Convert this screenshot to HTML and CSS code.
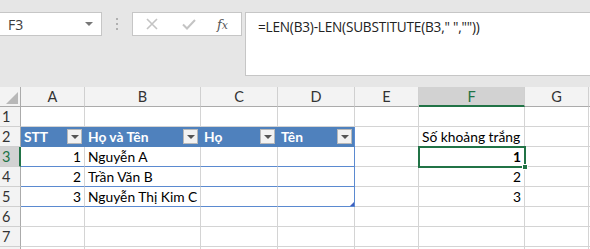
FILE: index.html
```html
<!DOCTYPE html>
<html>
<head>
<meta charset="utf-8">
<link rel="stylesheet" href="styles.css">
</head>
<body>
<div class="app">
  <div class="toolbar">
    <div class="namebox"><span class="ref">F3</span><span class="caret"></span></div>
    <div class="grip"><i></i><i></i><i></i></div>
    <div class="fnbox">
      <svg class="ico" width="14" height="14" viewBox="0 0 14 14"><path d="M2 2 L12 12 M12 2 L2 12" stroke="#c4c4c4" stroke-width="1.6" fill="none"/></svg>
      <svg class="ico" width="16" height="14" viewBox="0 0 16 14"><path d="M2 7.5 L6 11.5 L14 3" stroke="#c4c4c4" stroke-width="2" fill="none"/></svg>
      <span class="fx">f<span class="x">x</span></span>
    </div>
    <div class="formula">=LEN(B3)-LEN(SUBSTITUTE(B3," ",""))</div>
  </div>
  <div class="sheet">
    <div class="corner"><svg width="14" height="14" viewBox="0 0 14 14"><path d="M14 2 L14 14 L2 14 Z" fill="#b8b8b8"/></svg></div>
    <div class="ch">A</div><div class="ch">B</div><div class="ch">C</div><div class="ch">D</div><div class="ch">E</div><div class="ch sel">F</div><div class="ch">G</div><div class="ch end"></div>

    <div class="rh">1</div><div class="c"></div><div class="c"></div><div class="c"></div><div class="c"></div><div class="c"></div><div class="c"></div><div class="c"></div><div class="c end"></div>

    <div class="rh">2</div>
    <div class="c th">STT<span class="flt"></span></div>
    <div class="c th">Họ và Tên<span class="flt"></span></div>
    <div class="c th">Họ<span class="flt"></span></div>
    <div class="c th tr">Tên<span class="flt"></span></div>
    <div class="c"></div><div class="c">Số khoảng trắng</div><div class="c"></div><div class="c end"></div>

    <div class="rh sel">3</div>
    <div class="c td num">1</div><div class="c td">Nguyễn A</div><div class="c td"></div><div class="c td tr"></div>
    <div class="c"></div><div class="c num active"><b>1</b><span class="handle"></span></div><div class="c"></div><div class="c end"></div>

    <div class="rh">4</div>
    <div class="c td num">2</div><div class="c td">Trần Văn B</div><div class="c td"></div><div class="c td tr"></div>
    <div class="c"></div><div class="c num">2</div><div class="c"></div><div class="c end"></div>

    <div class="rh">5</div>
    <div class="c td num">3</div><div class="c td">Nguyễn Thị Kim C</div><div class="c td"></div><div class="c td tr last"><span class="resize"></span></div>
    <div class="c"></div><div class="c num">3</div><div class="c"></div><div class="c end"></div>

    <div class="rh">6</div><div class="c"></div><div class="c"></div><div class="c"></div><div class="c"></div><div class="c"></div><div class="c"></div><div class="c"></div><div class="c end"></div>
    <div class="rh">7</div><div class="c"></div><div class="c"></div><div class="c"></div><div class="c"></div><div class="c"></div><div class="c"></div><div class="c"></div><div class="c end"></div>
    <div class="rh"></div><div class="c"></div><div class="c"></div><div class="c"></div><div class="c"></div><div class="c"></div><div class="c"></div><div class="c"></div><div class="c end"></div>
  </div>
</div>
</body>
</html>
```

FILE: styles.css
```css
* { box-sizing: border-box; }
html, body { margin: 0; padding: 0; }
body {
  width: 590px;
  height: 249px;
  overflow: hidden;
  background: #e6e6e6;
  font-family: Lato, "Noto Sans", sans-serif;
  font-size: 13.8px;
  color: #000;
}
.app { display: flex; flex-direction: column; height: 249px; overflow: hidden; }
.toolbar {
  display: flex;
  align-items: flex-start;
  height: 87px;
  flex: none;
  padding-top: 12px;
}
.namebox {
  width: 102px;
  height: 24px;
  background: #fff;
  border: 1px solid #c6c6c6;
  border-left: none;
  display: flex;
  align-items: center;
  justify-content: space-between;
  padding: 0 8px 0 8px;
  color: #444;
}
.ref { font-family: "Open Sans", sans-serif; font-size: 14px; color: #3b3b3b; }
.caret {
  width: 0; height: 0;
  border-left: 4px solid transparent;
  border-right: 4px solid transparent;
  border-top: 4px solid #777;
}
.grip {
  width: 30px;
  height: 24px;
  display: flex;
  flex-direction: column;
  align-items: center;
  justify-content: center;
  gap: 3px;
}
.grip i { display: block; width: 2px; height: 2px; background: #b0b0b0; }
.fnbox {
  width: 110px;
  height: 24px;
  background: #fff;
  border: 1px solid #c6c6c6;
  display: flex;
  align-items: center;
  padding-left: 12px;
  gap: 22px;
}
.fx {
  font-family: "DejaVu Serif", "Liberation Serif", serif;
  font-style: italic;
  font-size: 13px;
  color: #555;
  margin-left: -2px;
}
.fx .x { font-size: 11px; }
.formula {
  margin-left: 3px;
  flex: 1;
  height: 64px;
  background: #fff;
  border: 1px solid #c6c6c6;
  border-right: none;
  padding: 4px 0 0 12px;
  font-family: "Open Sans", sans-serif;
  font-size: 13.6px;
  color: #222;
  letter-spacing: -0.2px;
}
.sheet {
  display: grid;
  grid-template-columns: 21px 64px 116px 77px 77px 64px 106px 64px 1fr;
  grid-auto-rows: 20px;
  background: #fff;
}
.corner, .ch, .rh {
  background: #f3f3f3;
  border-right: 1px solid #d0d0d0;
  border-bottom: 1px solid #d0d0d0;
  color: #333;
  font-size: 14.5px;
}
.corner { display: flex; align-items: flex-end; justify-content: flex-end; padding: 0 2px 2px 0; border-bottom-color: #ababab; border-right-color: #ababab; }
.ch { display: flex; align-items: center; justify-content: center; border-bottom-color: #ababab; }
.ch.end { border-right: none; }
.ch.sel { background: #d2d2d2; color: #217346; border-bottom: 2px solid #217346; }
.rh { display: flex; align-items: center; padding-left: 2px; border-right-color: #ababab; }
.rh.sel { background: #d2d2d2; color: #217346; border-right: 2px solid #217346; }
.c {
  border-right: 1px solid #d4d4d4;
  border-bottom: 1px solid #d4d4d4;
  padding: 0 3px;
  display: flex;
  align-items: flex-end;
  padding-bottom: 0;
  line-height: 19px;
  white-space: nowrap;
  position: relative;
}
.c.end { border-right: none; }
.num { justify-content: flex-end; }
.th {
  background: #4f81bd;
  color: #fff;
  font-weight: bold;
  border-right-color: #4f81bd;
  border-bottom-color: #4f81bd;
  justify-content: space-between;
  align-items: center;
  padding-right: 2px;
}
.flt {
  width: 15px;
  height: 15px;
  background: #f2f2f2;
  border: 1px solid #b8b8b8;
  position: relative;
}
.flt::after {
  content: "";
  position: absolute;
  left: 3px; top: 5px;
  border-left: 4px solid transparent;
  border-right: 4px solid transparent;
  border-top: 4px solid #555;
}
.td { border-bottom-color: #5b8ad0; }
.tr { border-right-color: #5b8ad0; }
.resize {
  position: absolute;
  right: 0; bottom: 0;
  width: 0; height: 0;
  border-left: 4px solid transparent;
  border-bottom: 4px solid #3f5fbf;
}
.active {
  outline: 2px solid #217346;
  outline-offset: -1px;
  z-index: 2;
}
.handle {
  position: absolute;
  right: -4px; bottom: -4px;
  width: 6px; height: 6px;
  background: #217346;
  border: 1px solid #fff;
}
```
